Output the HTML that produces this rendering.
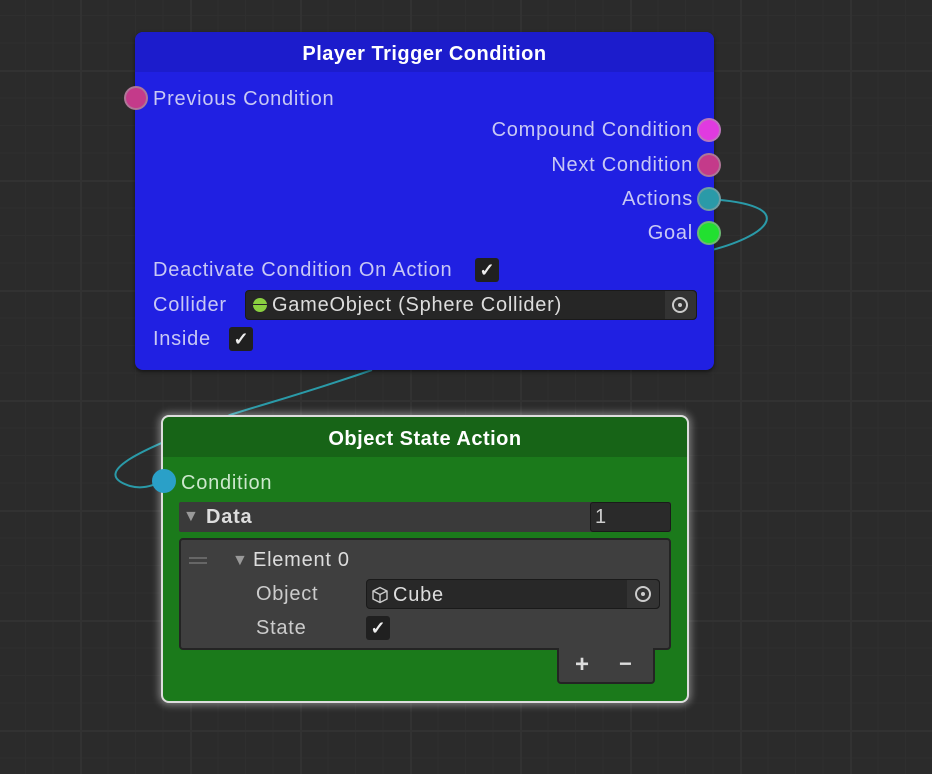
<!DOCTYPE html>
<html><head><meta charset="utf-8"><style>
*{box-sizing:border-box;margin:0;padding:0}
body{width:932px;height:774px;overflow:hidden;position:relative;font-family:"Liberation Sans",sans-serif;
background-color:#2b2b2b;
background-image:
linear-gradient(to right,#323232 0 2px,transparent 2px),
linear-gradient(to bottom,#323232 0 2px,transparent 2px),
linear-gradient(to right,#2f2f2f 0 1px,transparent 1px),
linear-gradient(to bottom,#2f2f2f 0 1px,transparent 1px);
background-size:110px 110px,110px 110px,27.5px 27.5px,27.5px 27.5px;
background-position:80px 0,0 70px,80px 0,0 70px;}
.abs{position:absolute}
.node{position:absolute;border-radius:8px;overflow:visible}
.t{position:absolute;font-size:20px;letter-spacing:0.75px;white-space:nowrap;line-height:22px}
.port{position:absolute;width:24px;height:24px;border-radius:50%;border:2px solid rgba(160,160,160,.6)}
.cb{position:absolute;width:24px;height:24px;background:#202020;border-radius:3px;color:#eee;font-size:18px;font-weight:bold;text-align:center;line-height:24px}
.hd{position:absolute;left:0;top:0;color:#fff;font-weight:bold;font-size:20px;letter-spacing:0.5px;text-align:center;line-height:44px}
</style></head><body>
<svg class="abs" style="left:0;top:0" width="932" height="774">
<path d="M709,199 C800,205 770,235 712,250" fill="none" stroke="#2a9aa8" stroke-width="2"/>
<path d="M372,370 C300,395 260,405 230,415 C170,440 80,470 130,486 C145,490 155,484 164,481" fill="none" stroke="#2a9aa8" stroke-width="2"/>
</svg>

<div class="node" style="left:135px;top:32px;width:579px;height:338px;background:#2020e2;box-shadow:0 2px 4px rgba(0,0,0,.5)">
<div class="hd" style="width:579px;height:40px;background:#1c1ccc;border-radius:8px 8px 0 0">Player Trigger Condition</div>
</div>
<div class="t" style="left:153px;top:88px;color:#c8c8f4">Previous Condition</div>
<div class="port" style="left:124px;top:86px;background:#c43a8a"></div>
<div class="t" style="right:239px;top:119px;color:#c8c8f4">Compound Condition</div>
<div class="port" style="left:697px;top:118px;background:#e03ae0"></div>
<div class="t" style="right:239px;top:154px;color:#c8c8f4">Next Condition</div>
<div class="port" style="left:697px;top:153px;background:#c43a8a"></div>
<div class="t" style="right:239px;top:188px;color:#c8c8f4">Actions</div>
<div class="port" style="left:697px;top:187px;background:#2a9aa8"></div>
<div class="t" style="right:239px;top:222px;color:#c8c8f4">Goal</div>
<div class="port" style="left:697px;top:221px;background:#22e030"></div>
<div class="t" style="left:153px;top:259px;color:#c8c8f4">Deactivate Condition On Action</div>
<div class="cb" style="left:475px;top:258px">✓</div>
<div class="t" style="left:153px;top:294px;color:#c8c8f4">Collider</div>
<div class="abs" style="left:245px;top:290px;width:452px;height:30px;background:#262626;border-radius:4px;border:1px solid #1a1a1a"></div>
<div class="abs" style="left:253px;top:298px;width:14px;height:14px;border-radius:50%;background:#8ad040"></div>
<div class="abs" style="left:253px;top:304px;width:14px;height:1px;background:#262626"></div>
<div class="t" style="left:272px;top:294px;color:#ddd">GameObject (Sphere Collider)</div>
<div class="abs" style="left:665px;top:291px;width:31px;height:28px;background:#333;border-radius:0 4px 4px 0"></div>
<div class="abs" style="left:672px;top:297px;width:16px;height:16px;border-radius:50%;border:2px solid #ccc"></div>
<div class="abs" style="left:678px;top:303px;width:4px;height:4px;border-radius:50%;background:#ccc"></div>
<div class="t" style="left:153px;top:328px;color:#c8c8f4">Inside</div>
<div class="cb" style="left:229px;top:327px">✓</div>

<div class="node" style="left:161px;top:415px;width:528px;height:288px;background:#1b7a1b;border:2px solid #ddd;box-shadow:0 0 8px 2px rgba(255,255,255,.4)">
<div class="hd" style="width:524px;height:40px;background:#176417;border-radius:7px 7px 0 0">Object State Action</div>
</div>
<div class="port" style="left:152px;top:469px;background:#2aa0c8;border-color:#2aa0c8"></div>
<div class="t" style="left:181px;top:472px;color:#cde8cd">Condition</div>
<div class="abs" style="left:179px;top:502px;width:492px;height:30px;background:#3a3a3a;border-radius:2px"></div>
<div class="t" style="left:183px;top:506px;color:#999;font-size:16px">▼</div>
<div class="t" style="left:206px;top:506px;color:#ddd;font-weight:bold">Data</div>
<div class="abs" style="left:590px;top:502px;width:81px;height:30px;background:#2a2a2a;border:1px solid #1a1a1a;border-radius:3px"></div>
<div class="t" style="left:595px;top:506px;color:#ccc">1</div>
<div class="abs" style="left:179px;top:538px;width:492px;height:112px;background:#3f3f3f;border:2px solid #242424;border-radius:4px"></div>
<div class="abs" style="left:189px;top:557px;width:18px;height:2px;background:#666"></div>
<div class="abs" style="left:189px;top:562px;width:18px;height:2px;background:#666"></div>
<div class="t" style="left:232px;top:550px;color:#999;font-size:16px">▼</div>
<div class="t" style="left:253px;top:549px;color:#ddd">Element 0</div>
<div class="t" style="left:256px;top:583px;color:#ccc">Object</div>
<div class="abs" style="left:366px;top:579px;width:294px;height:30px;background:#282828;border:1px solid #1a1a1a;border-radius:4px"></div>
<svg class="abs" style="left:371px;top:586px" width="18" height="18" viewBox="0 0 18 18"><path d="M9 1.5L16 5v8l-7 3.5L2 13V5z M2 5l7 3.5L16 5 M9 8.5v8" fill="none" stroke="#ccc" stroke-width="1.4" stroke-linejoin="round"/></svg>
<div class="t" style="left:393px;top:584px;color:#ddd">Cube</div>
<div class="abs" style="left:627px;top:580px;width:32px;height:28px;background:#333;border-radius:0 4px 4px 0"></div>
<div class="abs" style="left:635px;top:586px;width:16px;height:16px;border-radius:50%;border:2px solid #ccc"></div>
<div class="abs" style="left:641px;top:592px;width:4px;height:4px;border-radius:50%;background:#ccc"></div>
<div class="t" style="left:256px;top:617px;color:#ccc">State</div>
<div class="cb" style="left:366px;top:616px">✓</div>
<div class="abs" style="left:557px;top:648px;width:98px;height:36px;background:#3f3f3f;border:2px solid #242424;border-top:none;border-radius:0 0 4px 4px"></div>
<div class="t" style="left:575px;top:654px;color:#ddd;font-size:24px;font-weight:bold">+</div>
<div class="t" style="left:619px;top:653px;color:#ddd;font-size:22px;font-weight:bold">−</div>
</body></html>
